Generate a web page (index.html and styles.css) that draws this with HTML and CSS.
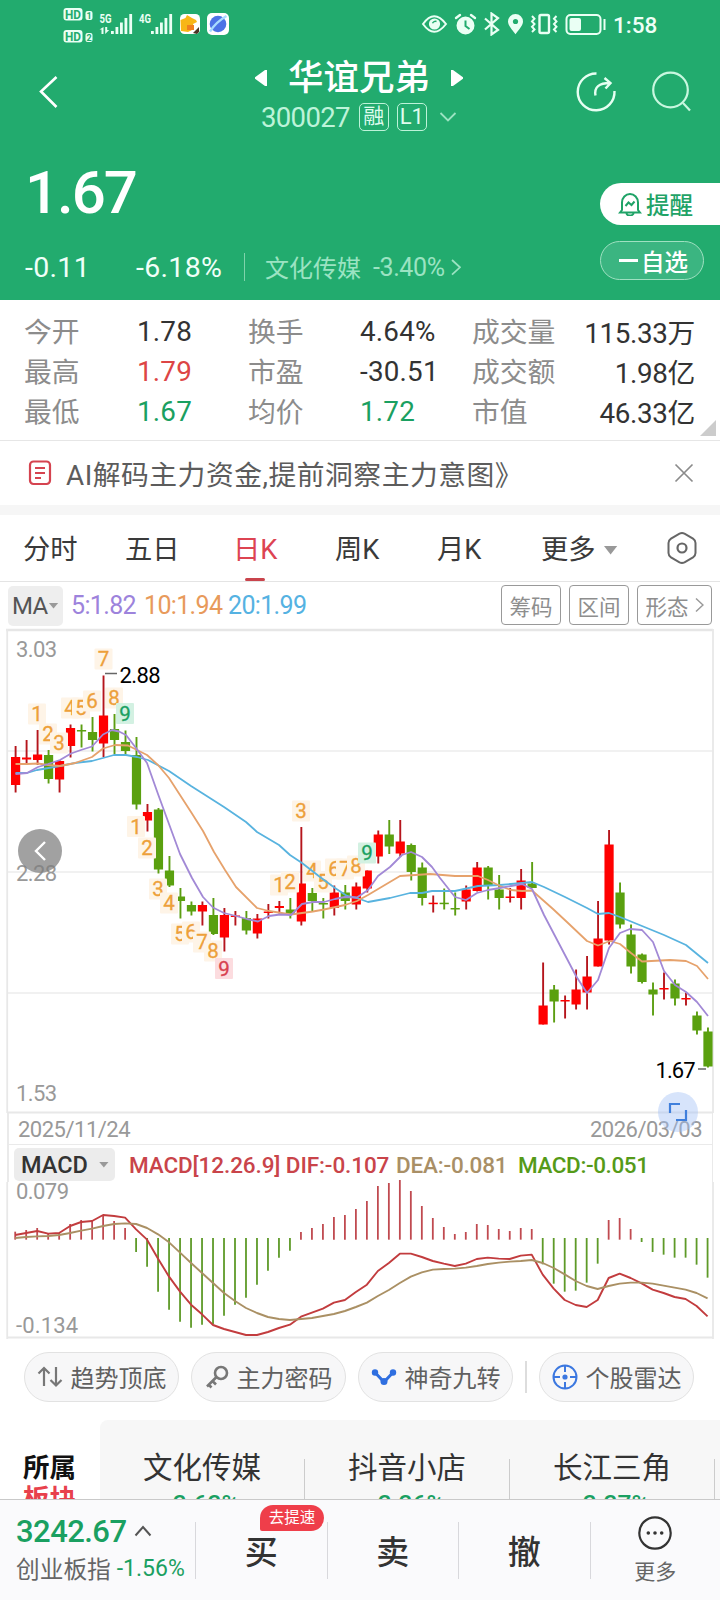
FILE: index.html
```html
<!DOCTYPE html>
<html lang="zh-CN">
<head>
<meta charset="utf-8">
<title>华谊兄弟 300027</title>
<link rel="stylesheet" href="styles.css">
</head>
<body>
<div class="app">
  <header class="hero">
    <div class="status">
      <svg class="status-left" width="170" height="40" viewBox="62 4 170 40">
        <g fill="#eafff4">
          <rect x="63.500" y="8" width="19" height="12.500" rx="3"/><rect x="63.500" y="30" width="19" height="12.500" rx="3"/>
          <rect x="85.500" y="11" width="7" height="9" rx="2"/><rect x="85.500" y="33" width="7" height="9" rx="2"/>
          <rect x="111" y="31" width="2.800" height="3"/><rect x="115.500" y="27" width="2.800" height="7"/><rect x="120" y="22.500" width="2.800" height="11.500"/><rect x="124.500" y="18" width="2.800" height="16"/><rect x="129.300" y="14" width="2.800" height="20"/>
          <rect x="151" y="31" width="2.800" height="3"/><rect x="155.500" y="27" width="2.800" height="7"/><rect x="160" y="22.500" width="2.800" height="11.500"/><rect x="164.500" y="18" width="2.800" height="16"/><rect x="169.300" y="14" width="2.800" height="20"/>
          <path d="M103.500 27v7h-2v-4.500h-2zM105.200 27v7l4-4h-2v-3z"/>
          <rect x="180" y="14" width="20" height="20" rx="4.500" fill="#fff"/><rect x="207" y="13" width="22" height="22" rx="5" fill="#fff"/>
        </g>
        <g class="net" fill="#22ab6e"><text x="65" y="19" font-size="13" textLength="16" lengthAdjust="spacingAndGlyphs">HD</text><text x="65" y="41" font-size="13" textLength="16" lengthAdjust="spacingAndGlyphs">HD</text><text x="86.500" y="19" font-size="9">1</text><text x="86.500" y="41" font-size="9">2</text></g>
        <g class="net" fill="#eafff4"><text x="99.500" y="22.800" font-size="13" textLength="12" lengthAdjust="spacingAndGlyphs">5G</text><text x="139" y="22.800" font-size="13" textLength="12" lengthAdjust="spacingAndGlyphs">4G</text></g>
        <path d="M180.500 20l5-2 1.500-3 5 3 4 2 1 2-4 2 1 5-6 3-7-1z" fill="#f8b616"/><rect x="187" y="25" width="7" height="5" fill="#f07f1d"/><path d="M193 33l6-6v5l-2 2z" fill="#4b3425"/>
        <circle cx="218" cy="24" r="8.300" fill="#4c73e6"/><path d="M210 31.500Q216 22 226.500 16" stroke="#a8dcff" stroke-width="2.400" fill="none"/>
      </svg>
      <div class="status-right">
        <svg width="186" height="24" viewBox="421 12 186 24">
          <g fill="none" stroke="#eafff4" stroke-width="2">
            <path d="M423 24Q434 8.500 446 24Q434 39.500 423 24z"/><circle cx="434.500" cy="24" r="4.600" fill="#eafff4"/>
            <path d="M436.500 21.500a3 3 0 0 0-4 1.800" stroke="#22ab6e" stroke-width="1.400"/>
            <circle cx="465.500" cy="25.500" r="8" fill="#eafff4"/><path d="M456 18l4-3M475 18l-4-3" stroke-linecap="round" stroke-width="2.400"/><path d="M465.500 20.500v5.500l4 3" stroke="#22ab6e"/>
            <path d="M485 18.500l13 11.500-6.500 4.500v-21L498 18 485 29.500" stroke-width="2.200"/>
            <rect x="539.500" y="15" width="9.500" height="18" rx="1.500" stroke-width="2.400"/>
            <path d="M532 16l2.500 2.700-2.500 2.700 2.500 2.700-2.500 2.700 2.500 2.700-2.500 2.500M556.500 16l-2.500 2.700 2.500 2.700-2.500 2.700 2.500 2.700-2.500 2.700 2.500 2.500"/>
            <rect x="566.500" y="15" width="34" height="19" rx="4"/><path d="M604.500 19v11"/>
          </g>
          <path d="M515.500 14a7.500 7.500 0 0 1 7.500 7.600c0 4-4 8-7.500 12.700-3.500-4.700-7.500-8.700-7.500-12.700a7.500 7.500 0 0 1 7.500-7.600z" fill="#eafff4"/><circle cx="515.500" cy="21.500" r="2.600" fill="#22ab6e"/>
          <rect x="569.500" y="18" width="11.500" height="13" rx="2" fill="#eafff4"/>
        </svg>
        <span class="clock">1:58</span>
      </div>
    </div>
    <div class="title-bar">
      <svg width="24" height="36" viewBox="36 74 24 36"><path d="M56.500 77L41 91.500 56.500 107" fill="none" stroke="#fff" stroke-width="2.600"/></svg>
      <div class="title-center">
        <div class="name-row">
          <svg width="12" height="18" viewBox="0 0 12 18"><path d="M12 1v16h-2L0 9.700V8.300L10 1z" fill="#fff"/></svg>
          <h1>华谊兄弟</h1>
          <svg width="12" height="18" viewBox="0 0 12 18"><path d="M0 1v16h2l10-7.300V8.300L2 1z" fill="#fff"/></svg>
        </div>
        <div class="code-row"><span class="code">300027</span><span class="tag">融</span><span class="tag l1">L1</span>
          <svg width="18" height="10" viewBox="0 0 18 10"><path d="M1.500 1L9 8.500 16.500 1" fill="none" stroke="#9be3c2" stroke-width="1.800"/></svg>
        </div>
      </div>
      <div class="title-tools">
        <svg width="42" height="42" viewBox="575 70 42 42"><g fill="none" stroke="#e6fff2" stroke-width="2.400"><path d="M596.500 73.500A18.400 18.400 0 1 0 614.500 91"/><path d="M595.500 95.500C594 87 599 83 610 83M604.500 78l6 5-5 5.500"/></g></svg>
        <svg width="42" height="42" viewBox="650 70 42 42"><g fill="none" stroke="#c8f7df" stroke-width="2.200"><circle cx="670.500" cy="90" r="17.300"/><path d="M683 103l7 7.500"/></g></svg>
      </div>
    </div>
    <div class="quote">
      <div class="price">1.67</div>
      <div class="change-row"><span class="chg">-0.11</span><span class="pct">-6.18%</span><i class="bar"></i><span class="sector">文化传媒</span><span class="sector-pct">-3.40%</span>
        <svg width="10" height="18" viewBox="0 0 10 18"><path d="M1 2l8 7.300-8 7.300" fill="none" stroke="#9be3c2" stroke-width="1.800"/></svg>
      </div>
      <div class="actions">
        <div class="remind"><svg width="24" height="24" viewBox="618 192 24 24"><g fill="none" stroke="#1fa367" stroke-width="2"><path d="M622 210v-7.500a8 8.500 0 0 1 16 0v7.500l2 2.500h-20z"/><path d="M625.500 206l3-3.500 3 2.500 3-3.500M626.500 213a3.500 2.500 0 0 0 7 0"/></g></svg>提醒</div>
        <div class="watch"><i></i>自选</div>
      </div>
    </div>
  </header>

  <section class="stats">
    <span class="k">今开</span><span class="v">1.78</span><span class="k">换手</span><span class="v">4.64%</span><span class="k">成交量</span><span class="v end">115.33万</span>
    <span class="k">最高</span><span class="v red">1.79</span><span class="k">市盈</span><span class="v">-30.51</span><span class="k">成交额</span><span class="v end">1.98亿</span>
    <span class="k">最低</span><span class="v green">1.67</span><span class="k">均价</span><span class="v green">1.72</span><span class="k">市值</span><span class="v end">46.33亿</span>
    <i class="corner"></i>
  </section>

  <section class="notice">
    <svg width="24" height="26" viewBox="0 0 24 26"><rect x="2" y="1.500" width="20" height="22.500" rx="3.500" fill="none" stroke="#d5434f" stroke-width="2.200"/><path d="M7 8h10M7 13h10M7 18h6" stroke="#d5434f" stroke-width="2.200"/></svg>
    <span class="notice-text">AI解码主力资金,提前洞察主力意图》</span>
    <svg width="20" height="20" viewBox="0 0 20 20"><path d="M1.500 1.500l17 17M18.500 1.500l-17 17" stroke="#8b8b8b" stroke-width="1.700"/></svg>
  </section>

  <nav class="tabs">
    <span>分时</span><span>五日</span><span class="active">日K</span><span>周K</span><span>月K</span>
    <span class="more">更多<i></i></span>
    <svg width="32" height="34" viewBox="0 0 32 34"><path d="M13.500 2.700Q16 1.500 18.500 2.700L27 7.600Q29.500 9.300 29.500 12v10Q29.500 24.700 27 26.400L18.500 31.300Q16 32.500 13.500 31.300L5 26.400Q2.500 24.700 2.500 22V12Q2.500 9.300 5 7.600z" fill="none" stroke="#666" stroke-width="2"/><circle cx="16" cy="17" r="4.500" fill="none" stroke="#666" stroke-width="2.200"/></svg>
  </nav>

  <section class="ma">
    <span class="ma-select">MA<i></i></span>
    <span class="ma5">5:1.82</span><span class="ma10">10:1.94</span><span class="ma20">20:1.99</span>
    <div class="ma-tools"><span>筹码</span><span>区间</span><span>形态<svg width="9" height="16" viewBox="0 0 9 16"><path d="M1 1.500L8 8l-7 6.500" fill="none" stroke="#999" stroke-width="1.500"/></svg></span></div>
  </section>

  <section class="chart">
    <svg id="kline" width="720" height="484" viewBox="0 629 720 484"></svg>
    <div class="dates"><span>2025/11/24</span><span>2026/03/03</span></div>
    <div class="macd-head"><span class="macd-select">MACD<i></i></span><span class="dif">MACD[12.26.9] DIF:-0.107</span><span class="dea">DEA:-0.081</span><span class="hist">MACD:-0.051</span></div>
    <svg id="macd" width="720" height="158" viewBox="0 1182 720 158"></svg>
    <button class="prev"><svg width="16" height="24" viewBox="0 0 16 24"><path d="M13 3L4 12l9 9" fill="none" stroke="#fff" stroke-width="2.400"/></svg></button>
    <button class="expand"><svg width="20" height="20" viewBox="0 0 20 20"><path d="M2 11V2h10M18 8v10H8" fill="none" stroke="#3f7fdc" stroke-width="2.200"/></svg></button>
  </section>

  <section class="chips">
    <span class="chip"><svg width="26" height="22" viewBox="0 0 26 22"><path d="M7 20V2M1.500 7.500L7 2l5.500 5.500M19 1v18M13.500 14l5.500 5.500 5.500-5.500" fill="none" stroke="#777" stroke-width="2.200"/></svg>趋势顶底</span>
    <span class="chip"><svg width="24" height="24" viewBox="0 0 24 24"><g fill="none" stroke="#777" stroke-width="2.600"><circle cx="16" cy="8" r="6"/><path d="M11.500 12L2 21.500M7.500 16l3.500 3.500M3.500 19.500l3 3"/></g></svg>主力密码</span>
    <span class="chip"><svg width="26" height="18" viewBox="0 0 26 18"><path d="M4 4.500L13 14l9-9.500" fill="none" stroke="#2f6fe0" stroke-width="3"/><g fill="#2f6fe0"><circle cx="4" cy="4.500" r="3.200"/><circle cx="13" cy="13.500" r="3.500"/><circle cx="22" cy="4.500" r="3.200"/></g></svg>神奇九转</span>
    <i class="split"></i>
    <span class="chip"><svg width="26" height="26" viewBox="0 0 26 26"><g fill="none" stroke="#3c78e0" stroke-width="2"><circle cx="13" cy="13" r="11.500"/><path d="M13 2v6M13 18v6M2 13h6M18 13h6"/></g><circle cx="13" cy="13" r="2.600" fill="#3c78e0"/></svg>个股雷达</span>
  </section>

  <section class="sectors">
    <div class="belong"><b>所属</b><b class="red">板块</b></div>
    <div class="sector-list">
      <div><span>文化传媒</span><em>-2.62%</em></div>
      <div><span>抖音小店</span><em>-2.26%</em></div>
      <div><span>长江三角</span><em>-2.27%</em></div>
    </div>
  </section>

  <footer class="bottom">
    <div class="index"><div class="idx-top"><span class="idx-val">3242.67</span><svg width="18" height="12" viewBox="0 0 18 12"><path d="M1.500 10.500L9 2l7.500 8.500" fill="none" stroke="#555" stroke-width="2"/></svg></div>
      <div class="idx-sub"><span>创业板指</span><em>-1.56%</em></div></div>
    <div class="trade">买<span class="badge">去提速</span></div>
    <div class="trade">卖</div>
    <div class="trade">撤</div>
    <div class="trade more-btn"><svg width="36" height="36" viewBox="0 0 36 36"><circle cx="18" cy="18" r="15.700" fill="none" stroke="#333" stroke-width="2.200"/><g fill="#333"><circle cx="11.300" cy="18" r="1.800"/><circle cx="18" cy="18" r="1.800"/><circle cx="24.700" cy="18" r="1.800"/></g></svg><span>更多</span></div>
  </footer>
</div>
<script src="chart.js"></script>
</body>
</html>
```

FILE: styles.css
```css
* { box-sizing: border-box; }
body { margin: 0; font-family: Roboto, "Noto Sans CJK SC", sans-serif; color: #333; background: #fff; }
i, em { font-style: normal; }
svg { display: block; flex: none; }
.app { width: 720px; height: 1600px; overflow: hidden; display: flex; flex-direction: column; }
.app > * { flex: none; }
.red { color: #dd4545; }
.green { color: #1aa061; }

.hero { height: 300px; background: #22ab6e; color: #fff; display: flex; flex-direction: column; }
.status { height: 48px; padding: 4px 0 0 62px; display: flex; }
.status-right { display: flex; margin-left: 189px; padding-top: 8px; gap: 6px; }
.clock { font-size: 22.5px; line-height: 27px; font-weight: 500; color: #effff7; }
.net { font-family: Roboto, sans-serif; font-weight: 700; }
.title-bar { height: 92px; display: flex; align-items: flex-start; padding-left: 36px; }
.title-bar > svg { margin-top: 26px; }
.title-center { width: 212px; margin-left: 194px; padding-top: 6px; }
.name-row { display: flex; justify-content: space-between; align-items: center; width: 208px; margin-left: 1px; height: 46px; padding-top: 2px; }
.name-row h1 { margin: 0; font-size: 35.5px; font-weight: 500; line-height: 46px; }
.code-row { display: flex; align-items: center; height: 34px; padding-left: 7px; }
.code { font-size: 27.5px; letter-spacing: -0.65px; color: #bdf3d9; margin-right: 9px; }
.tag { flex: none; width: 30px; height: 28px; border: 1.5px solid #bdf3d9; border-radius: 5px; font-size: 21px; line-height: 25px; text-align: center; color: #dffcee; margin-right: 8px; }
.tag.l1 { font-size: 22px; margin-right: 12px; }
.title-tools { display: flex; gap: 33px; margin-left: 109px; padding-top: 22px; }
.quote { flex: 1; position: relative; padding-left: 25px; }
.price { font-size: 60px; line-height: 70px; font-weight: 500; letter-spacing: -2px; margin-top: 18px; }
.change-row { display: flex; align-items: center; height: 34px; margin-top: 22px; white-space: nowrap; }
.chg, .pct { font-size: 28.5px; letter-spacing: 0.3px; flex: none; width: 111px; color: #f0fff8; }
.pct { width: 108px; }
.bar { width: 1px; height: 28px; background: #7fd3ab; margin-right: 20px; }
.sector { font-size: 24px; color: #9be3c2; margin-top: -2px; }
.sector-pct { font-size: 25px; letter-spacing: -0.4px; color: #9be3c2; margin: 0 6px 0 12px; }
.actions { position: absolute; right: 0; top: 43px; width: 120px; display: flex; flex-direction: column; gap: 16px; }
.remind { height: 42px; background: #fff; border-radius: 21px 0 0 21px; color: #1fa367; display: flex; align-items: center; gap: 4px; padding: 0 0 1px 18px; font-size: 23.5px; font-weight: 500; }
.watch { height: 39px; width: 104px; border: 1px solid #9fe0c1; border-radius: 20px; background: #3bb581; display: flex; align-items: center; font-size: 23.5px; font-weight: 500; padding: 0 0 0 18px; gap: 3px; }
.watch i { width: 19px; height: 2.5px; background: #fff; }

.stats { height: 141px; border-bottom: 1px solid #e6e6e6; padding: 11px 25px 0 24px; display: grid; grid-template-columns: 113px 111px 112px 112px 90px 1fr; grid-auto-rows: 40px; align-items: center; position: relative; white-space: nowrap; }
.k { font-size: 27.8px; color: #8c8c8c; margin-top: -2px; }
.v { font-size: 27.8px; letter-spacing: 0.2px; }
.end { text-align: right; letter-spacing: -0.35px; margin-top: -1px; }
.corner { position: absolute; right: 4px; bottom: 4px; width: 16px; height: 16px; background: #ccc; clip-path: polygon(100% 0, 100% 100%, 0 100%); }

.notice { height: 74px; border-bottom: 10px solid #f6f6f6; display: flex; align-items: center; padding: 0 26px 0 28px; }
.notice-text { flex: 1; font-size: 27.8px; letter-spacing: 0.5px; color: #5c5c5c; margin: -1px 0 0 14px; white-space: nowrap; }

.tabs { height: 67px; border-bottom: 1px solid #e4e4e4; display: flex; align-items: center; padding: 4px 22px 0 23px; font-size: 27.3px; line-height: 63px; color: #3a3a3a; }
.tabs span { width: 104px; }
.tabs span:nth-child(1) { width: 102px; }
.tabs span:nth-child(2) { width: 108px; }
.tabs .active { width: 102px; color: #dd4452; position: relative; }
.tabs span:nth-child(4) { width: 102px; }
.active::after { content: ""; position: absolute; left: 12px; bottom: 1px; width: 20px; height: 3px; border-radius: 2px; background: #c9444c; }
.tabs .more { width: 125px; display: flex; align-items: center; gap: 8px; }
.tabs svg { margin-top: -4px; }
.more i { width: 14px; height: 9px; background: #999; clip-path: polygon(0 0, 100% 0, 50% 100%); }

.ma { height: 47px; display: flex; align-items: center; padding: 0 8px; font-size: 25px; letter-spacing: -0.65px; white-space: nowrap; }
.ma-select { width: 55px; height: 40px; line-height: 40px; background: #eee; border-radius: 5px; padding-left: 4px; color: #555; display: flex; align-items: center; font-size: 24px; gap: 1px; }
.ma-select i, .macd-select i { width: 10px; height: 6px; background: #999; clip-path: polygon(0 0, 100% 0, 50% 100%); }
.ma5 { color: #9d83dc; margin-left: 8px; width: 73px; }
.ma10 { color: #e89a5b; width: 84px; }
.ma20 { color: #55b2e2; }
.ma-tools { display: flex; gap: 8px; margin: -1px 0 0 auto; letter-spacing: 0; }
.ma-tools span { width: 60px; height: 40px; border: 1px solid #999; border-radius: 4px; font-size: 21.5px; color: #8e8e8e; display: flex; align-items: center; justify-content: center; gap: 6px; }
.ma-tools span:last-child { width: 75px; }

.chart { height: 711px; position: relative; }
.chart > svg { overflow: visible; }
.chart text { font-family: Roboto, sans-serif; }
.dates { height: 32px; margin: 0 7px; border: solid #eaeaea; border-width: 0 1px 1px 2px; padding: 2px 10px 0 9px; display: flex; justify-content: space-between; align-items: center; font-size: 22px; letter-spacing: -0.5px; color: #999; }
.macd-head { height: 37px; display: flex; align-items: center; margin: 0 7px; border: solid #eaeaea; border-width: 0 1px 0 2px; padding: 2px 0 0 5px; font-size: 22.5px; white-space: nowrap; font-weight: 500; }
.macd-select { width: 101px; height: 33px; background: #ececec; border-radius: 5px; padding-left: 7px; display: flex; align-items: center; gap: 11px; font-size: 23.5px; }
.dif { color: #c9444a; margin-left: 14px; width: 267px; letter-spacing: -0.1px; }
.dea { color: #a98f66; width: 122px; letter-spacing: -0.2px; }
.hist { color: #559a18; letter-spacing: -0.4px; }
.prev { position: absolute; left: 18px; top: 200px; width: 44px; height: 44px; border: 0; border-radius: 50%; background: rgba(125,125,125,.72); display: grid; place-items: center; padding: 0; }
.expand { position: absolute; left: 658px; top: 463px; width: 40px; height: 40px; border: 0; border-radius: 50%; background: rgba(160,190,245,.42); display: grid; place-items: center; padding: 0; }

.chips { height: 80px; display: flex; padding: 12px 24px 0; gap: 12px; }
.chip { width: 155px; height: 50px; border: 1px solid #e2e2e2; border-radius: 25px; background: #f7f7f8; display: flex; align-items: center; justify-content: center; gap: 8px; font-size: 24px; color: #606060; white-space: nowrap; padding-bottom: 1px; }
.split { width: 2px; height: 32px; background: #ddd; margin-top: 9px; }

.sectors { height: 79px; display: flex; overflow: hidden; }
.belong { flex: none; width: 100px; padding: 31px 0 0 23px; display: flex; flex-direction: column; font-size: 26.5px; line-height: 34px; color: #111; }
.belong .red { color: #e8414c; margin-top: -3px; }
.sector-list { flex: none; width: 635px; height: 120px; background: #f7f7f7; border-radius: 8px 0 0 0; display: flex; padding-top: 39px; }
.sector-list div { width: 205px; border-right: 1px solid #ccc; display: flex; flex-direction: column; align-items: center; font-size: 29.5px; line-height: 14px; }
.sector-list div span { line-height: 40px; margin-top: -11px; }
.sector-list em { font-size: 24.5px; line-height: 26px; margin-top: 3px; color: #1aa061; font-weight: 500; }

.bottom { height: 101px; border-top: 1px solid #c9c9c9; background: #fafafc; display: flex; padding-top: 22px; }
.index { width: 196px; height: 57px; border-right: 1px solid #d8d8dc; padding-left: 16px; }
.idx-top { display: flex; align-items: center; gap: 8px; height: 20px; margin-top: -1px; }
.idx-val { font-size: 31px; font-weight: 500; letter-spacing: -0.55px; color: #1aa061; }
.idx-sub { display: flex; align-items: center; gap: 6px; margin-top: 12px; height: 30px; font-size: 23.7px; color: #666; white-space: nowrap; }
.idx-sub em { font-size: 23px; letter-spacing: 0; color: #1aa061; }
.trade { width: 131.5px; height: 57px; border-right: 1px solid #d8d8dc; font-size: 33px; font-weight: 500; line-height: 62px; text-align: center; position: relative; }
.badge { position: absolute; left: 64px; top: -17px; width: 64px; height: 26px; border-radius: 13px 13px 13px 2px; background: #ef3e4a; color: #fff; font-size: 15.5px; font-weight: 400; line-height: 26px; }
.more-btn { border: 0; flex: 1; width: auto; display: flex; flex-direction: column; align-items: center; }
.more-btn svg { margin-top: -7px; }
.more-btn span { font-size: 21px; line-height: 30px; font-weight: 400; color: #666; margin-top: 6px; }
```

FILE: chart.js
```javascript
const STEP = 10.99, X0 = 15.6;
const px = i => X0 + i * STEP;
const line = (pts, color, w = 1.8) =>
  `<polyline points="${pts}" fill="none" stroke="${color}" stroke-width="${w}" stroke-linejoin="round"/>`;

// direction, high, body top, body bottom, low
const candles = `r 746 757 785 792.5|r 740 757.5 759.5 763|r 730 754.5 760 765|g 750 755 779 783.5|r 760 761 779.5 792.5|r 724.5 728 746 757.5|g 724.5 730 731.5 747.5|g 717 732 740 751.5|r 675.5 715.5 743.5 757|g 714 729 740 754.5|g 730.5 742 751 754|g 737 755 804.5 809.5|r 804 812 820.5 831.5|g 808 809.5 869.5 873.5|g 856 870.5 885.5 887|g 888 896.5 901 918.5|g 901.5 905 911.5 915.5|r 901.5 905 911.5 925.5|g 898 915 934 935|r 908 915 937.5 951.5|r 911 915.5 917 925.5|g 911 918 930.5 934.5|r 914 918.5 933.5 938.5|r 904 911.5 913 918.5|r 901 906 908 913.5|g 898 909.5 914.5 918.5|r 827 883.5 921.5 925.5|g 888 893 901 911.5|g 898 903 904.5 918.5|r 885.5 892.5 908 915.5|g 885 892.5 901 909.5|r 882.5 886.5 904.5 909.5|r 870.5 870.5 888.5 892.5|r 830.5 834.5 856.5 863.5|g 820 834.5 846.5 854|r 820 841.5 853.5 857|g 843.5 845 872 880.5|g 862.5 867.5 898 905.5|r 895.5 902.7 904.2 912.5|g 888.5 902.7 904.2 909.5|g 892.5 908 909.5 915.5|r 885.5 889.5 901.5 909.5|r 862 867.5 891 891.5|g 866 867.5 885.5 899.5|g 875 889.5 898 909.5|r 888 896.5 898 902.5|r 869 880.5 898 909.5|g 862 883.5 888 888|r 962.5 1005.5 1024.5 1024.5|g 985 989.5 1001.5 1022.5|r 995.5 1000 1001.5 1018.5|r 969.5 989.5 1004.5 1009.5|r 956 976.5 992.5 1009.5|r 901 938.5 966.5 966.5|r 830 844.5 940.5 944.5|g 882.5 892.5 924.5 928.5|g 924.5 934.5 966.5 973.5|g 953.5 954.5 982 983.5|g 982.5 989.5 994.5 1015.5|r 972.5 988 989.5 999.5|g 979.5 983.5 998.5 1005.5|r 992.5 998 999.5 1005.5|g 1011.5 1015.5 1030.5 1034.5|g 1027.5 1031.5 1066.5 1067.5`
  .split('|').map(s => s.split(' '));

// digit, centre x, centre y, optional tone
const marks = [[1,37,714],[2,48,734],[3,59,743],[4,70,708],[5,81,708],[6,92,701],[7,103.5,659],[8,114,698],[9,125,713.5,'g'],
  [1,136,826.5],[2,147,848],[3,158,889],[4,169,903],[5,180,934],[6,191,932],[7,202,942],[8,213,951],[9,224,968.5,'r'],
  [1,279,885],[2,290,882],[3,301,811],[4,312,871],[5,323,882],[6,334,869],[7,345,869],[8,356,866],[9,367,853,'g']];
const tones = { g: ['#d3f1e2', '#1aa061'], r: ['#fcdcdf', '#d8404e'], o: ['#fef4e7', '#eda03a'] };

const ma5 = '15.5,774 27,773 38,767 48,764 60,760 71,753.5 81,750 92,746.5 98,740 103,734.5 112,730 119,731.5 126,735 136,748 147,763 158,794 169,824 180,854 192,878 203,897 213,907.5 224,913 236,916 247,919 258,921.5 269,916 280,914.5 291,915 302,904 313,902 324,902 335,899 345,897 357,897.5 368,890 378,876 390,867 402,855 411,852 422,857 432,867 440,878 455,897 466,900 477,893 488,890 500,888 511,886 522,884 532,889 544,915 576,976 587,993 598,980 609,948 620,933 630,929 642,930 653,942 664,971 675,985 686,992 697,1002 708,1016';
const ma10 = '15.5,764 27,764 38,763.5 48,765 60,766 75,763 92,757 103,748.5 115,745 128,745.5 147,755 158,765 169,778 180,795 191,812 203,831 214,852 225,870 236,887 257,908 269,911 291,914.5 313,911.5 324,909.5 345,905 357,901 368,895 400,876 430,874 455,876 478,876 488,880 500,886 511,890 522,891 532,890.5 553,909 568,923 587,941 598,945.5 610,941 620,944 631,953 642,961.5 670,960 686,961 697,966 708,979';
const ma20 = '15.5,773 27,773 37,770 60,766 75,763 92,761 114,755 126,755 137,757 148,760 169,771 191,786 202,793 224,807 246,822 257,832 279,845 290,855 302,863 320,877 335,888 347,896 357,898 368,902 390,898 410,893 422,893 432,891 455,891 478,886 500,885 522,883 532,882 544,887 565,897 587,908 598,914 609,913 620,917 642,926 664,935 686,945 697,954 708,963';

let k = '<g stroke="#ededed" stroke-width="1.500"><path d="M7 751H713M7 872H713M7 993H713"/></g>' +
  '<path d="M6 630H713" stroke="#e6e6e6" stroke-width="2.500"/><path d="M7.200 629V1113M713 629V1113M7 1112.500H713" stroke="#e8e8e8" stroke-width="1.800" fill="none"/>' +
  '<g font-size="22" fill="#999"><text x="16" y="657" textLength="41">3.03</text><text x="16" y="881" textLength="41">2.28</text><text x="16" y="1101" textLength="41">1.53</text></g>';
candles.forEach(([d, h, t, b, l], i) => {
  const x = px(i), red = d === 'r';
  k += `<path d="M${x} ${h}V${l}" stroke="${red ? '#b5151c' : '#5c9e12'}" stroke-width="1.900"/>` +
    `<rect x="${x - 4.6}" y="${t}" width="9.200" height="${b - t}" fill="${red ? '#ff0000' : '#5aa00f'}"/>`;
});
marks.forEach(([n, x, y, tone = 'o']) => {
  const [bg, fg] = tones[tone];
  k += `<rect x="${x - 9}" y="${y - 10.5}" width="18" height="21" rx="1" fill="${bg}"/>` +
    `<text x="${x}" y="${y + 7}" font-size="20.500" text-anchor="middle" fill="${fg}" stroke="${fg}" stroke-width=".3">${n}</text>`;
});
k += line(ma20, '#58b3df') + line(ma10, '#e6a26c') + line(ma5, '#a289d6');
k += '<path d="M105 673.500H117M698 1069H706" stroke="#666" stroke-width="1.600"/>' +
  '<g font-size="22" fill="#000"><text x="119.500" y="682.500" textLength="41">2.88</text><text x="655.500" y="1077.500" textLength="40">1.67</text></g>';
document.getElementById('kline').innerHTML = k;

// bar ends, and the two averages, in thirds of a pixel below 1100
const bars = [395,390,384,401,399,372,360,360,345,363,384,456,500,575,629,665,683,674,672,647,614,593,554,512,473,452,396,384,372,351,345,327,303,258,249,240,273,318,354,381,402,396,372,375,387,393,384,387,493,551,575,572,548,491,360,354,387,426,456,464,473,473,494,533];
const dif = [405,399,393,401,399,378,366,363,345,348,353,388,419,476,530,575,614,643,675,687,696,705,705,696,684,674,650,638,626,608,600,576,554,513,489,461,461,471,483,491,498,491,477,473,476,477,467,464,524,566,600,615,621,600,534,521,534,550,569,579,591,597,618,649];
const dea = [414,411,409,408,405,399,392,386,378,372,370,372,384,403,427,458,489,519,549,579,603,624,639,651,657,660,657,654,648,642,633,621,608,588,570,549,530,517,509,507,506,503,498,492,488,485,483,480,489,504,523,543,558,567,558,551,548,548,551,557,563,569,579,595];
const py = v => 1100 + v / 3;
const series = a => a.map((v, i) => `${px(i) - .4},${py(v)}`).join(' ');
let m = '<path d="M7.200 1182V1339M713 1182V1339M7 1337.500H713" stroke="#e8e8e8" stroke-width="1.800" fill="none"/>' +
  '<g font-size="22" fill="#999"><text x="16" y="1199" textLength="53">0.079</text><text x="16" y="1333" textLength="62">-0.134</text></g>';
bars.forEach((v, i) => {
  const up = v < 415;
  m += `<path d="M${px(i) - .4} ${py(up ? 419 : 414)}V${py(v)}" stroke="${up ? '#c04a50' : '#5e9a28'}" stroke-width="1.800"/>`;
});
m += line(series(dif), '#c23c3e', 1.9) + line(series(dea), '#aa9064', 1.9);
document.getElementById('macd').innerHTML = m;
```
